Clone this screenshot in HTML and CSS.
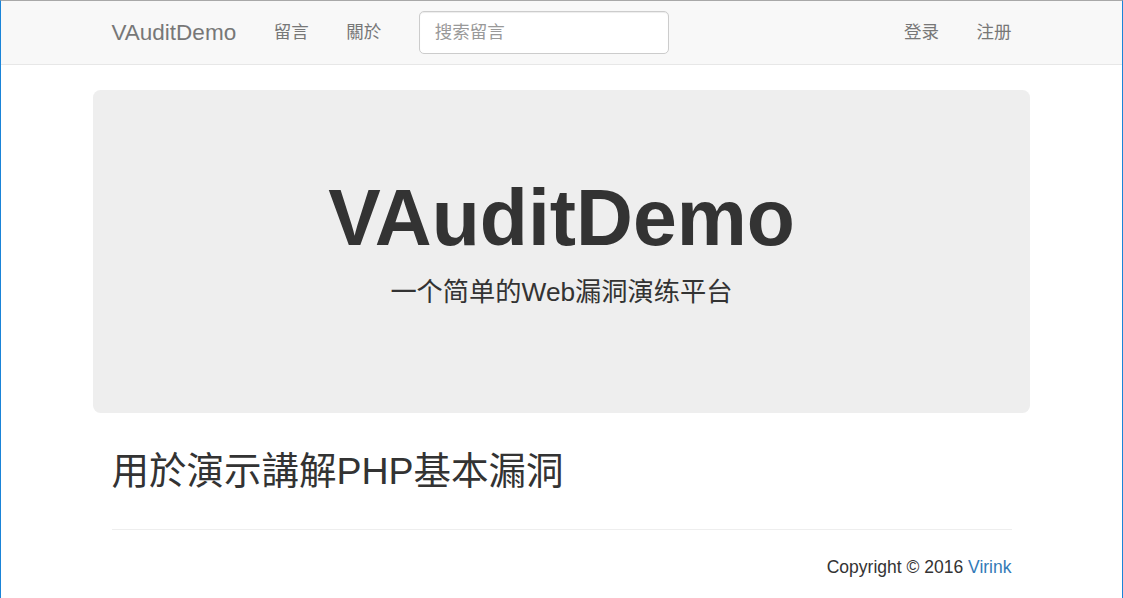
FILE: index.html
```html
<!DOCTYPE html>
<html lang="zh">
<head>
<meta charset="utf-8">
<title>VAuditDemo</title>
<link rel="stylesheet" href="styles.css">
</head>
<body>
<nav class="navbar">
  <div class="container nav-inner">
    <a class="brand" href="#">VAuditDemo</a>
    <ul class="nav">
      <li><a href="#">留言</a></li>
      <li><a href="#">關於</a></li>
    </ul>
    <form class="search">
      <input class="search-input" type="text" placeholder="搜索留言">
    </form>
    <ul class="nav nav-right">
      <li><a href="#">登录</a></li>
      <li><a href="#">注册</a></li>
    </ul>
  </div>
</nav>
<div class="jumbotron">
  <h1 class="jumbo-title">VAuditDemo</h1>
  <p class="jumbo-lead">一个简单的Web漏洞演练平台</p>
</div>
<div class="container">
  <h2 class="intro">用於演示講解PHP基本漏洞</h2>
  <hr class="divider">
  <footer class="footer">
    <p class="copy">Copyright © 2016 <a class="link" href="#">Virink</a></p>
  </footer>
</div>
</body>
</html>
```
FILE: styles.css
```css
* { box-sizing: border-box; }
html, body { margin: 0; padding: 0; }
body {
  min-height: 100vh;
  border-left: 1px solid #1a84d8;
  border-right: 1px solid #1a84d8;
  border-top: 1px solid #a8a8a8;
  background: #fff;
  color: #333;
  font-family: "Liberation Sans", Arial, "Noto Sans CJK SC", sans-serif;
  font-size: 17.5px;
  line-height: 1.42857;
}
a { text-decoration: none; }
.container {
  width: 937.5px;
  margin: 0 auto;
  padding: 0 18.75px;
}
.navbar {
  background: #f8f8f8;
  border-bottom: 1px solid #e7e7e7;
  margin-bottom: 25px;
}
.nav-inner {
  display: flex;
  align-items: flex-start;
  height: 62.5px;
}
.brand {
  margin-left: -18.75px;
  padding: 18.75px;
  height: 62.5px;
  font-size: 22.5px;
  line-height: 25px;
  color: #777;
}
.nav {
  display: flex;
  list-style: none;
  margin: 0;
  padding: 0;
}
.nav a {
  display: block;
  padding: 18.75px;
  line-height: 25px;
  color: #777;
  font-size: 17.5px;
}
.nav-right {
  margin-left: auto;
  margin-right: -18.75px;
}
.search {
  margin: 10px 0;
  padding: 0 18.75px;
}
.search-input {
  display: block;
  width: 250px;
  height: 42.5px;
  padding: 7.5px 15px;
  font-family: inherit;
  font-size: 17.5px;
  color: #555;
  background: #fff;
  border: 1px solid #ccc;
  border-radius: 5px;
  box-shadow: inset 0 1px 1px rgba(0,0,0,.075);
  outline: none;
}
.search-input::placeholder { color: #999; }
.jumbotron {
  width: 937.5px;
  margin: 0 auto 37.5px;
  padding: 60px 75px 83px;
  background: #eee;
  border-radius: 7.5px;
  text-align: center;
}
.jumbo-title {
  margin: 25px 0 12.5px;
  font-size: 78.75px;
  line-height: 1.1;
  font-weight: 700;
  color: #333;
}
.jumbo-lead {
  margin: 0 0 18.75px;
  font-size: 26.25px;
  font-weight: 400;
  line-height: 1.42857;
}
.intro {
  margin: 0 0 12.5px;
  padding-top: 1px;
  font-size: 37.5px;
  font-weight: 400;
  line-height: 1.1;
}
.divider {
  margin: 36px 0 25px;
  border: 0;
  border-top: 1px solid #eee;
}
.footer { text-align: right; }
.copy { margin: 0; line-height: 25px; }
.link { color: #337ab7; }
```
